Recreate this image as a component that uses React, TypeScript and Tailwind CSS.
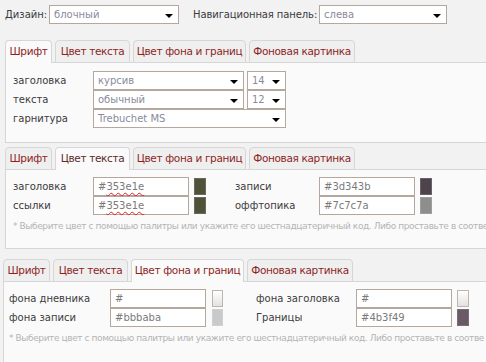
import React from "react";

const F = "font-['DejaVu_Sans',sans-serif]";

function Arrow() {
  return (
    <span className="absolute right-[5px] top-[8px] w-0 h-0 border-l-[4px] border-r-[4px] border-t-[4px] border-l-transparent border-r-transparent border-t-black" />
  );
}

function Select({ text, className }: { text: string; className: string }) {
  return (
    <div
      className={`relative h-[19px] border border-[#b3a79e] bg-white flex items-center pl-[4px] text-[#8a8a9c] shrink-0 ${className}`}
    >
      <span className="leading-none">{text}</span>
      <Arrow />
    </div>
  );
}

function Input({ value, spell, className }: { value: string; spell?: boolean; className: string }) {
  return (
    <div
      className={`h-[19px] border border-[#b3a79e] bg-white flex items-center pl-[4px] text-[#7a7a7a] shrink-0 ${className}`}
    >
      <span className="leading-none">
        #
        {spell ? (
          <span className="underline decoration-wavy decoration-[#e02020] decoration-1 underline-offset-2">
            {value}
          </span>
        ) : (
          value
        )}
      </span>
    </div>
  );
}

function Swatch({ color, className }: { color: string; className: string }) {
  return <div className={`h-[17px] shrink-0 border ${color} ${className}`} />;
}

function Tabs({ active, darkActive }: { active: number; darkActive?: boolean }) {
  const tabs = [
    { t: "Шрифт", w: "w-[47px]" },
    { t: "Цвет текста", w: "w-[75px]" },
    { t: "Цвет фона и границ", w: "w-[113px]" },
    { t: "Фоновая картинка", w: "w-[106px]" },
  ];
  return (
    <div className="relative z-10 flex gap-[3px] -mb-px">
      {tabs.map((tab, i) =>
        i === active ? (
          <div
            key={i}
            className={`${tab.w} h-[23px] border border-b-0 border-[#d6d6d6] rounded-t-[4px] bg-[#fafafa] flex items-center justify-center whitespace-nowrap text-[10.5px] tracking-[-0.35px] ${
              darkActive ? "text-[#5a2c2c]" : "text-[#8e1f24]"
            }`}
          >
            {tab.t}
          </div>
        ) : (
          <div
            key={i}
            className={`${tab.w} h-[23px] border border-[#d6d6d6] rounded-t-[4px] bg-[#efefef] flex items-center justify-center whitespace-nowrap text-[10.5px] tracking-[-0.35px] text-[#8e1f24]`}
          >
            {tab.t}
          </div>
        )
      )}
    </div>
  );
}

const NOTE =
  "* Выберите цвет с помощью палитры или укажите его шестнадцатеричный код. Либо проставьте в соотве";

export default function App() {
  return (
    <div className={`w-[486px] h-[362px] overflow-hidden bg-[#f2f2f2] text-[10px] text-[#3a3a3a] ${F}`}>
      {/* top row */}
      <div className="flex items-center pl-[5px] pt-[5px]">
        <span className="w-[44px] shrink-0">Дизайн:</span>
        <Select text="блочный" className="w-[130px]" />
        <span className="ml-[14px] w-[126px] shrink-0 whitespace-nowrap tracking-[-0.1px]">Навигационная панель:</span>
        <Select text="слева" className="w-[128px]" />
      </div>

      {/* block 1 */}
      <div className="ml-[5px] mt-[16px]">
        <Tabs active={0} />
        <div className="w-[490px] h-[81px] border border-r-0 border-[#d6d6d6] bg-[#fafafa] pl-[7px] pt-[8px]">
          <div className="flex items-center">
            <span className="w-[80px] shrink-0">заголовка</span>
            <Select text="курсив" className="w-[151px]" />
            <Select text="14" className="w-[39px] ml-[3px]" />
          </div>
          <div className="flex items-center">
            <span className="w-[80px] shrink-0">текста</span>
            <Select text="обычный" className="w-[151px]" />
            <Select text="12" className="w-[39px] ml-[3px]" />
          </div>
          <div className="flex items-center">
            <span className="w-[80px] shrink-0">гарнитура</span>
            <Select text="Trebuchet MS" className="w-[193px]" />
          </div>
        </div>
      </div>

      {/* block 2 */}
      <div className="ml-[5px] mt-[4px]">
        <Tabs active={1} darkActive />
        <div className="w-[490px] h-[80px] border border-r-0 border-[#d6d6d6] bg-[#fafafa] pl-[7px] pt-[7px]">
          <div className="flex items-center">
            <span className="w-[80px] shrink-0">заголовка</span>
            <Input value="353e1e" spell className="w-[96px]" />
            <Swatch color="bg-[#4f5139] border-[#6b6b5c]" className="w-[12px] ml-[5px]" />
            <span className="ml-[29px] w-[84px] shrink-0">записи</span>
            <Input value="3d343b" className="w-[96px]" />
            <Swatch color="bg-[#4d434b] border-[#6a6068]" className="w-[12px] ml-[5px]" />
          </div>
          <div className="flex items-center">
            <span className="w-[80px] shrink-0">ссылки</span>
            <Input value="353e1e" spell className="w-[96px]" />
            <Swatch color="bg-[#4f5139] border-[#6b6b5c]" className="w-[12px] ml-[5px]" />
            <span className="ml-[29px] w-[84px] shrink-0">оффтопика</span>
            <Input value="7c7c7a" className="w-[96px]" />
            <Swatch color="bg-[#8e8e8c] border-[#9e9e9c]" className="w-[12px] ml-[5px]" />
          </div>
          <div className="mt-[5px] text-[9px] leading-[12px] tracking-[-0.4px] text-[#b4b4b4] whitespace-nowrap">{NOTE}</div>
        </div>
      </div>

      {/* block 3 */}
      <div className="ml-[3px] mt-[10px]">
        <Tabs active={2} />
        <div className="w-[490px] h-[90px] border border-r-0 border-[#d6d6d6] bg-[#fafafa] pl-[5px] pt-[7px]">
          <div className="flex items-center">
            <span className="w-[101px] shrink-0">фона дневника</span>
            <Input value="" className="w-[96px]" />
            <Swatch color="bg-gradient-to-b from-white to-[#e4e2e0] border-[#bdb5ae]" className="w-[11px] ml-[6px]" />
            <span className="ml-[33px] w-[100px] shrink-0">фона заголовка</span>
            <Input value="" className="w-[96px]" />
            <Swatch color="bg-gradient-to-b from-white to-[#e4e2e0] border-[#bdb5ae]" className="w-[12px] ml-[5px]" />
          </div>
          <div className="flex items-center">
            <span className="w-[101px] shrink-0">фона записи</span>
            <Input value="bbbaba" className="w-[96px]" />
            <Swatch color="bg-[#c9c9c9] border-[#d0d0d0]" className="w-[11px] ml-[6px]" />
            <span className="ml-[33px] w-[100px] shrink-0">Границы</span>
            <Input value="4b3f49" className="w-[96px]" />
            <Swatch color="bg-[#6a5a66] border-[#7a6c76]" className="w-[12px] ml-[5px]" />
          </div>
          <div className="mt-[5px] text-[9px] leading-[12px] tracking-[-0.4px] text-[#b4b4b4] whitespace-nowrap">{NOTE}</div>
        </div>
      </div>
    </div>
  );
}
